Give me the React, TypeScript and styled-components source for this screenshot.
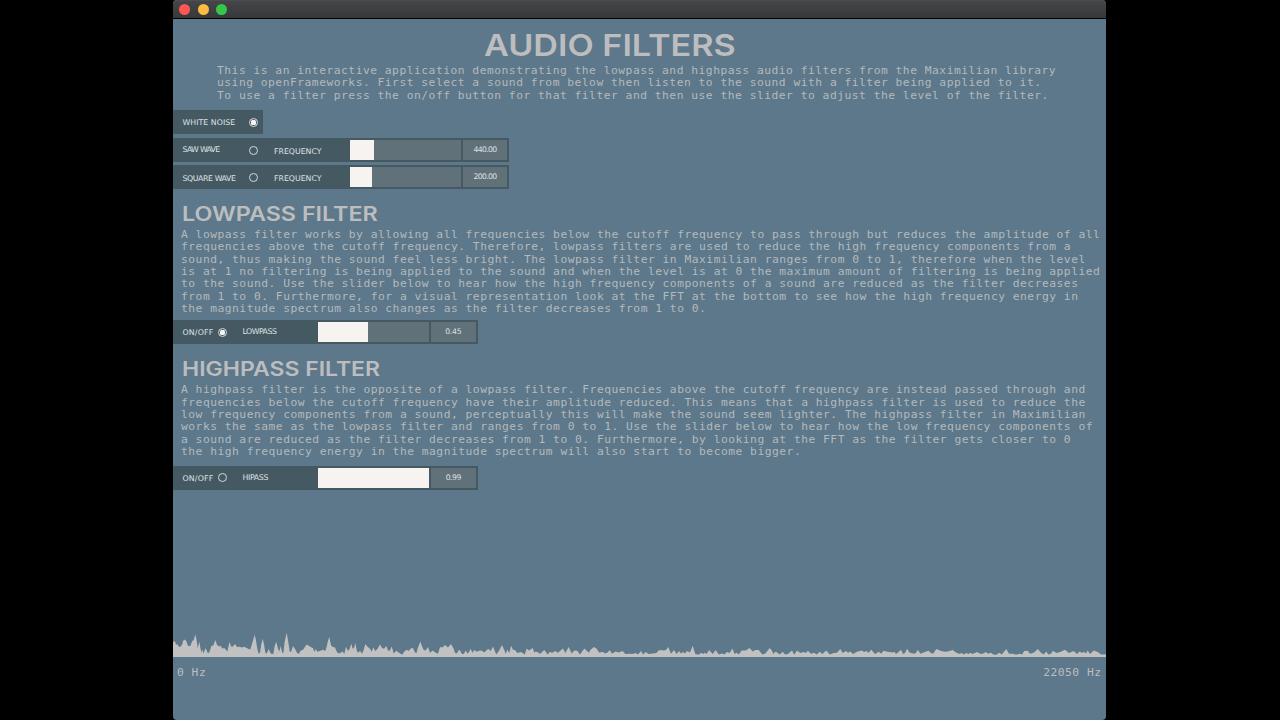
import React from 'react';
import styled, { createGlobalStyle } from 'styled-components';

const Global = createGlobalStyle`
  body { margin: 0; background: #000; overflow: hidden; }
  * { box-sizing: border-box; }
`;

const Desktop = styled.div`
  width: 1280px;
  height: 720px;
  background: #000;
  padding-left: 173px;
`;

const Window = styled.div`
  width: 933px;
  height: 720px;
  display: flex;
  flex-direction: column;
  border-radius: 4px;
  overflow: hidden;
  background: #5c788a;
  color: #bdbdbf;
`;

const TitleBar = styled.div`
  height: 19px;
  flex: none;
  display: flex;
  align-items: center;
  gap: 7.4px;
  padding-left: 6.4px;
  background: linear-gradient(#454649, #37383a);
  border-top: 1px solid #4c4d50;
  border-bottom: 1px solid #000;
`;

const Light = styled.i<{ $color: string }>`
  width: 11px;
  height: 11px;
  border-radius: 50%;
  background: ${(p) => p.$color};
`;

const Title = styled.h1`
  margin: 8px 0 0 311px;
  height: 36px;
  font: 600 30.5px/36px Inter, sans-serif;
  white-space: nowrap;
  transform-origin: left;
  transform: scaleX(1.12);
  width: max-content;
`;

const Heading = styled.h2<{ $stretch: number }>`
  margin: 13px 0 0 8.5px;
  height: 24px;
  font: 600 19.5px/24px Inter, sans-serif;
  white-space: nowrap;
  transform-origin: left;
  transform: scaleX(${(p) => p.$stretch});
  width: max-content;
`;

const Copy = styled.p<{ $left: number; $top: number }>`
  margin: ${(p) => p.$top}px 0 0 ${(p) => p.$left}px;
  font: 11.3px/12.35px 'DejaVu Sans Mono', monospace;
  letter-spacing: 0.495px;
  color: #b5b9bc;
  white-space: pre;
`;

const Panel = styled.div<{ $width: number; $top: number }>`
  margin-top: ${(p) => p.$top}px;
  width: ${(p) => p.$width}px;
  height: 24px;
  flex: none;
  display: flex;
  align-items: center;
  padding: 2px 2px 2px 9.5px;
  background: #455963;
  color: #dfe2e4;
`;

const Label = styled.span<{ $width: number; $spacing?: number; $drop?: number }>`
  width: ${(p) => p.$width}px;
  padding-top: ${(p) => p.$drop ?? 0}px;
  font: 7.8px/12px 'DejaVu Sans', sans-serif;
  letter-spacing: ${(p) => p.$spacing ?? 0}px;
  white-space: nowrap;
  flex: none;
`;

const Radio = styled.span<{ $on?: boolean; $gap: number }>`
  width: 9px;
  height: 9px;
  flex: none;
  display: grid;
  place-items: center;
  margin-right: ${(p) => p.$gap}px;
  border: 1px solid #d4d9dc;
  border-radius: 50%;
  &::after {
    content: '';
    width: 5px;
    height: 5px;
    border-radius: 1.5px;
    background: ${(p) => (p.$on ? '#f7f5f4' : 'transparent')};
  }
`;

const Track = styled.span`
  width: 111px;
  height: 20px;
  flex: none;
  margin-right: 2px;
  background: #61717a;
`;

const Fill = styled.span<{ $width: number }>`
  display: block;
  height: 100%;
  width: ${(p) => p.$width}px;
  background: #f7f3f1;
`;

const Value = styled.span<{ $spacing: number }>`
  flex: 1;
  height: 20px;
  text-align: center;
  background: #61717a;
  font: 7.7px/20px 'DejaVu Sans', sans-serif;
  letter-spacing: ${(p) => p.$spacing}px;
`;

const Slider = ({ fill, value, spacing }: { fill: number; value: string; spacing: number }) => (
  <>
    <Track><Fill $width={fill} /></Track>
    <Value $spacing={spacing}>{value}</Value>
  </>
);

const Chart = styled.svg`
  display: block;
  width: 933px;
  height: 33px;
  flex: none;
  margin-top: 134px;
`;

const Axis = styled.div`
  display: flex;
  justify-content: space-between;
  padding: 9px 4.5px 0 4px;
  font: 11.3px/14px 'DejaVu Sans Mono', monospace;
  letter-spacing: 0.495px;
`;

// Magnitude curve in thirds of a pixel: x, then height above the axis.
const magnitudes: number[][] = [
  [0,40],[5,43],[9,33],[14,33],[18,25],[23,27],[27,32],[31,45],[36,48],[41,40],[45,28],[52,28],[58,43],[62,46],[67,63],[71,45],[74,22],[76,28],[79,42],[83,18],[86,8],[89,18],[92,5],[97,22],[101,15],[105,6],[110,12],[115,28],[121,30],[127,46],[132,32],[138,27],[143,29],[148,20],[153,23],[158,18],[163,12],[167,30],[170,41],[174,27],[179,26],[186,34],[192,25],[200,26],[207,24],[214,26],[221,22],[227,19],[232,18],[237,35],[241,48],[245,62],[249,45],[253,20],[257,5],[261,8],[265,34],[269,50],[273,34],[277,8],[281,6],[287,19],[292,8],[296,4],[301,4],[305,28],[310,41],[315,20],[319,12],[323,28],[327,10],[331,6],[335,42],[341,68],[346,40],[350,12],[354,10],[360,28],[366,19],[372,8],[377,4],[383,14],[390,17],[396,26],[401,33],[408,28],[416,24],[420,22],[424,10],[428,19],[433,11],[442,14],[450,17],[457,13],[461,26],[465,44],[469,55],[474,30],[480,25],[486,24],[491,12],[497,6],[503,8],[509,12],[514,4],[519,26],[525,13],[530,20],[535,35],[539,20],[543,22],[547,37],[552,12],[556,8],[561,14],[567,5],[572,16],[577,34],[583,27],[591,20],[596,11],[601,24],[607,13],[613,19],[621,33],[627,22],[633,20],[640,28],[645,15],[650,14],[656,27],[662,6],[670,14],[678,8],[688,2],[694,12],[701,17],[707,13],[713,21],
  [720,22],[725,10],[730,6],[735,24],[742,42],[748,25],[753,15],[759,16],[765,25],[771,8],[779,15],[788,8],[795,5],[801,25],[808,24],[816,31],[825,24],[834,34],[842,20],[846,7],[851,6],[859,18],[867,4],[872,4],[878,15],[884,5],[888,10],[893,20],[898,8],[904,16],[911,11],[918,14],[926,15],[933,9],[939,14],[946,20],[953,13],[960,27],[966,12],[970,3],[978,14],[987,31],[995,13],[998,4],[1003,17],[1009,7],[1014,29],[1020,17],[1026,16],[1033,7],[1044,10],[1055,3],[1061,21],[1068,15],[1079,22],[1084,8],[1088,12],[1096,9],[1101,4],[1114,16],[1124,3],[1131,11],[1137,7],[1146,13],[1155,8],[1161,13],[1170,21],[1177,7],[1187,25],[1196,6],[1204,15],[1213,14],[1221,3],[1234,21],[1242,13],[1248,8],[1252,16],[1263,25],[1271,20],[1278,9],[1290,10],[1297,6],[1303,8],[1310,16],[1317,5],[1328,12],[1337,9],[1349,13],[1357,4],[1370,5],[1379,4],[1388,7],[1395,3],[1404,13],[1410,3],[1418,10],[1427,4],[1440,6],
  [1450,7],[1457,15],[1463,16],[1473,15],[1479,16],[1486,25],[1494,5],[1503,16],[1511,4],[1518,13],[1524,6],[1530,10],[1536,6],[1542,13],[1551,9],[1559,29],[1567,4],[1577,2],[1585,8],[1590,4],[1595,8],[1601,4],[1608,16],[1619,4],[1628,16],[1637,3],[1648,6],[1655,3],[1661,10],[1670,7],[1678,21],[1685,4],[1691,8],[1697,3],[1706,15],[1718,15],[1730,22],[1739,12],[1747,16],[1757,16],[1768,3],[1777,6],[1790,22],[1797,14],[1801,4],[1808,12],[1820,3],[1829,11],[1836,3],[1845,4],[1857,15],[1864,2],[1872,15],[1882,7],[1892,10],[1898,7],[1905,14],[1914,5],[1923,8],[1931,3],[1940,11],[1948,4],[1960,15],[1970,3],[1982,7],[1992,8],[2002,19],[2009,7],[2019,13],[2025,8],[2032,12],[2040,4],[2052,11],[2066,15],[2073,10],[2081,13],[2086,7],[2095,17],[2106,4],[2117,11],[2125,6],[2132,14],[2143,11],[2160,9],
  [2164,11],[2169,4],[2174,8],[2184,17],[2190,4],[2196,7],[2202,20],[2210,8],[2226,5],[2235,16],[2242,5],[2256,10],[2266,14],[2274,7],[2280,5],[2290,19],[2304,13],[2315,11],[2325,12],[2339,16],[2350,8],[2361,4],[2365,8],[2372,3],[2380,7],[2386,4],[2393,8],[2398,4],[2406,7],[2412,10],[2421,5],[2430,5],[2438,10],[2446,5],[2454,8],[2461,3],[2470,2],[2479,8],[2486,3],[2500,19],[2508,5],[2520,5],[2529,2],[2540,5],[2547,3],[2554,13],[2564,14],[2571,5],[2580,7],[2587,12],[2594,19],[2604,8],[2612,3],[2620,12],[2626,3],[2634,5],[2640,14],[2650,7],[2662,10],[2676,17],[2688,7],[2702,13],[2712,4],[2720,12],[2727,7],[2733,11],[2739,6],[2744,15],[2751,4],[2762,15],[2774,10],[2784,3],[2799,3],
];

const curve = magnitudes.map(([x, h]) => `L${(x / 3).toFixed(1)} ${(31.4 - h / 3).toFixed(1)}`).join('');

export default function App() {
  return (
    <Desktop>
      <Global />
      <Window>
        <TitleBar>
          <Light $color="#fc5753" />
          <Light $color="#fdbc40" />
          <Light $color="#34c84a" />
        </TitleBar>
        <Title>AUDIO FILTERS</Title>
        <Copy $left={44} $top={2}>{`This is an interactive application demonstrating the lowpass and highpass audio filters from the Maximilian library
using openFrameworks. First select a sound from below then listen to the sound with a filter being applied to it.
To use a filter press the on/off button for that filter and then use the slider to adjust the level of the filter.`}</Copy>
        <Panel $width={90} $top={8}>
          <Label $width={66.5} $spacing={0.05} $drop={1}>WHITE NOISE</Label>
          <Radio $on $gap={0} />
        </Panel>
        <Panel $width={336} $top={4}>
          <Label $width={66.5} $spacing={-0.7}>SAW WAVE</Label>
          <Radio $gap={16} />
          <Label $width={76} $drop={3}>FREQUENCY</Label>
          <Slider fill={24.4} value="440.00" spacing={-0.65} />
        </Panel>
        <Panel $width={336} $top={3}>
          <Label $width={66.5} $drop={3} $spacing={-0.4}>SQUARE WAVE</Label>
          <Radio $gap={16} />
          <Label $width={76} $drop={3}>FREQUENCY</Label>
          <Slider fill={22.4} value="200.00" spacing={-0.65} />
        </Panel>
        <Heading $stretch={1.195}>LOWPASS FILTER</Heading>
        <Copy $left={8} $top={3}>{`A lowpass filter works by allowing all frequencies below the cutoff frequency to pass through but reduces the amplitude of all
frequencies above the cutoff frequency. Therefore, lowpass filters are used to reduce the high frequency components from a
sound, thus making the sound feel less bright. The lowpass filter in Maximilian ranges from 0 to 1, therefore when the level
is at 1 no filtering is being applied to the sound and when the level is at 0 the maximum amount of filtering is being applied
to the sound. Use the slider below to hear how the high frequency components of a sound are reduced as the filter decreases
from 1 to 0. Furthermore, for a visual representation look at the FFT at the bottom to see how the high frequency energy in
the magnitude spectrum also changes as the filter decreases from 1 to 0.`}</Copy>
        <Panel $width={304.5} $top={5}>
          <Label $width={35.5} $drop={2} $spacing={0.2}>ON/OFF</Label>
          <Radio $on $gap={15.5} />
          <Label $width={75.5} $spacing={-0.5}>LOWPASS</Label>
          <Slider fill={50} value="0.45" spacing={-0.25} />
        </Panel>
        <Heading $stretch={1.18}>HIGHPASS FILTER</Heading>
        <Copy $left={8} $top={3}>{`A highpass filter is the opposite of a lowpass filter. Frequencies above the cutoff frequency are instead passed through and
frequencies below the cutoff frequency have their amplitude reduced. This means that a highpass filter is used to reduce the
low frequency components from a sound, perceptually this will make the sound seem lighter. The highpass filter in Maximilian
works the same as the lowpass filter and ranges from 0 to 1. Use the slider below to hear how the low frequency components of
a sound are reduced as the filter decreases from 1 to 0. Furthermore, by looking at the FFT as the filter gets closer to 0
the high frequency energy in the magnitude spectrum will also start to become bigger.`}</Copy>
        <Panel $width={304.5} $top={7}>
          <Label $width={35.5} $drop={2} $spacing={0.2}>ON/OFF</Label>
          <Radio $gap={15.5} />
          <Label $width={75.5} $spacing={-0.35}>HIPASS</Label>
          <Slider fill={111} value="0.99" spacing={-0.5} />
        </Panel>
        <Chart viewBox="0 0 933 33">
          <path d={`M0 33${curve}L933 33Z`} fill="#c1c1c2" />
        </Chart>
        <Axis><span>0 Hz</span><span>22050 Hz</span></Axis>
      </Window>
    </Desktop>
  );
}
